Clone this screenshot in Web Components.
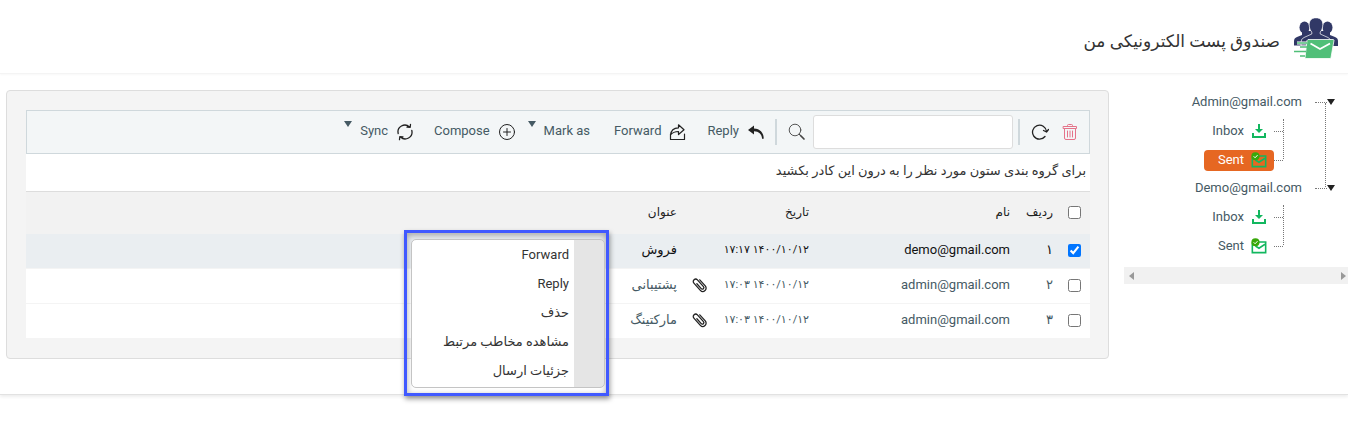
<!DOCTYPE html>
<html lang="fa" dir="rtl">
<head>
<meta charset="utf-8">
<title>صندوق پست الکترونیکی من</title>
<style>
body{margin:0;min-height:100vh;background:#fff;font:13px/20px Roboto,"DejaVu Sans",sans-serif;color:#455a64}
</style>
</head>
<body>
<mail-app></mail-app>
<script>
const base = '*{box-sizing:border-box}button{font:inherit;color:inherit;background:none;border:0;padding:0;cursor:pointer}ul{list-style:none;margin:0;padding:0}';
function define(name, css, html) {
  customElements.define(name, class extends HTMLElement {
    constructor() {
      super();
      this.attachShadow({mode: 'open'}).innerHTML = '<style>' + base + css + '</style>' + (typeof html === 'function' ? html(this) : html);
    }
  });
}

const stroke = 'fill="none" stroke="currentColor" stroke-linecap="round" stroke-linejoin="round"';
const icons = {
  trash: ['0 0 18 18', `<g ${stroke}><path d="M2.500 3.500h13v2h-13zM6.500 3.500v-1q0-1 1-1h3q1 0 1 1v1M3.500 5.500v9.500q0 1.500 1.500 1.500h8q1.500 0 1.500-1.500V5.500M6.500 8v6M9 8v6M11.500 8v6"/></g>`],
  refresh: ['0 0 18 18', `<g ${stroke} stroke-width="1.300"><path d="M15.500 8.500A7 7 0 1 0 14 13.500M17.500 6.500l-2 2.500-3-1.500"/></g>`],
  search: ['0 0 18 18', `<g ${stroke}><circle cx="7" cy="7" r="5.800" stroke-width=".9"/><path d="M11.200 11.200l1.200 1.200"/><path d="M12.500 12.500l3.500 3.500" stroke-width="1.700"/></g>`],
  reply: ['0 0 18 18', `<path d="M1 7l6-4.500v3c6 .3 9.500 4 9.700 9.500q0 1-.8 1t-.9-1c-.5-4-3-6.500-8-6.700v3.200z" fill="currentColor"/>`],
  forward: ['0 0 18 18', `<g ${stroke} stroke-width="1.200"><path d="M1.500 11v5.500h14V11M1.500 12c.5-5 3-7 8-7.200V1.800l5.500 5-5.500 4.700V8.500c-4 0-6 1-8 3.500z"/></g>`],
  plus: ['0 0 18 18', `<g ${stroke}><circle cx="9" cy="9" r="7.500"/><path d="M9 5.500v7M5.500 9h7"/></g>`],
  sync: ['0 0 18 18', `<g ${stroke} stroke-width="1.300"><path d="M2.200 10.500A6.800 6.800 0 0 1 13.500 4M15.800 7.500A6.800 6.800 0 0 1 4.500 14M11 4.200l3.200.1.300-3M7 13.800l-3.200-.1-.3 3"/></g>`],
  clip: ['0 0 18 18', `<g ${stroke} stroke-width="1.300" transform="rotate(-42 9 9)"><path d="M12.300 5v8.200a3.300 3.300 0 0 1-6.600 0V3.500a2.400 2.400 0 0 1 4.800 0v9a1.500 1.500 0 0 1-3 0V6"/></g>`],
  inbox: ['0 0 16 16', `<path d="M1 10v5h14v-5h-2v3H3v-3zM7 1h2v5h3l-4 4-4-4h3z" fill="#12b75f"/>`],
  sent: ['0 0 18 18', `<path d="M1.500 6v10.500h15V6.500l-7.500 5-4-2.500M9 4.500h7.500v3" fill="none" stroke="#12b75f" stroke-width="1.800"/><circle cx="5" cy="4.800" r="4.600" fill="#39a80a"/><path d="M3 4.800l1.600 1.700 2.800-3" fill="none" stroke="#fff" stroke-width="1.100"/>`],
  logo: ['0 0 44 42', `<g fill="#313866"><ellipse cx="10.500" cy="9.500" rx="5" ry="6"/><ellipse cx="33.500" cy="9.500" rx="5" ry="6"/><path d="M0 28v-5q0-3 3-4l5-2v-4h28v4l5 2q3 1 3 4v5z"/><path d="M22 -.2c5 0 7.500 3.700 6.700 8.500-.4 2.500-1 4.200-2.500 5.700v2l7.800 3.500q3 1.300 3 4.500v4H7v-4q0-3.200 3-4.500l7.800-3.500v-2c-1.500-1.500-2.100-3.200-2.500-5.700C14.500 3.500 17 -.2 22 -.2z" stroke="#fff" stroke-width=".7"/></g><path d="M3 25h12M1 29h13v12H1z" stroke="#fff" stroke-width="3" fill="#fff"/><path d="M14 21.500h25q1 0 1 1l-3 17q0 1-1 1H12q-1 0-1-1l2-17z" fill="#50bf78" stroke="#fff" stroke-width=".8"/><path d="M16.500 25.500l9.500 5.500 10-5.500" fill="none" stroke="#fff" stroke-width="1.800"/><path d="M3 25h10M6 29h7M0 33.500h12M6 38h5" stroke="#50bf78" stroke-width="1.400"/>`]
};
define('ui-icon', ':host{display:block;flex:none;width:18px;height:18px}svg{display:block;width:100%;height:100%}',
  el => { const i = icons[el.getAttribute('name')]; return `<svg viewBox="${i[0]}" aria-hidden="true">${i[1]}</svg>`; });

define('page-header', `
:host{display:flex;align-items:center;height:74px;padding:4px 10px 0;gap:14px;border-bottom:1px solid #f4f4f4;box-shadow:0 1px 2px #f8f8f8;color:#333}
ui-icon{width:44px;height:42px}
h1{margin:0;padding-top:4px;font-size:17px;line-height:24px;font-weight:400}`,
'<ui-icon name="logo"></ui-icon><h1><slot></slot></h1>');

define('tool-button', `
:host{display:block;flex:none;color:#455a64}
button{display:flex;align-items:center;gap:8px;height:24px}
span{padding-bottom:2px}
ui-icon{color:#222}
i{width:0;border:4px solid transparent;border-top:6px solid #455a64;border-bottom:0;margin-bottom:16px}`,
el => `<button type="button">${el.hasAttribute('icon') ? `<ui-icon name="${el.getAttribute('icon')}"></ui-icon>` : ''}<span>${el.getAttribute('label')}</span>${el.hasAttribute('menu') ? '<i></i>' : ''}</button>`);

define('mail-toolbar', `
:host{display:flex;align-items:center;height:44px;padding:0 10px;border:1px solid #cfd8dc;background:#f3f6f7}
.side,.main,.actions{display:flex;align-items:center}
.side{gap:12px}
ui-icon{color:#222}
.side button:first-child ui-icon{color:#e5738a}
hr{width:2px;height:26px;border:0;margin:0 11px 0 10px;background:#cfd8dc}
.main hr:first-child{margin-left:5px}
.main ui-icon{color:#444}
input{width:200px;height:34px;border:1px solid #ddd;border-radius:3px;background:#fff;margin-left:7px}
.actions{gap:20px}
tool-button[menu]{margin-left:-8px}
tool-button[menu]:not([icon]){margin-right:4px}`,
`<div class="side"><button type="button" aria-label="حذف"><ui-icon name="trash"></ui-icon></button><button type="button" aria-label="بارگذاری مجدد"><ui-icon name="refresh"></ui-icon></button></div>
<div class="main"><hr><input type="search" aria-label="جستجو"><button type="button" aria-label="جستجو"><ui-icon name="search"></ui-icon></button><hr></div>
<div class="actions"><tool-button icon="reply" label="Reply"></tool-button><tool-button icon="forward" label="Forward"></tool-button><tool-button label="Mark as" menu></tool-button><tool-button icon="plus" label="Compose"></tool-button><tool-button icon="sync" label="Sync" menu></tool-button></div>`);

const rows = [
  ['۱', 'demo@gmail.com', '۱۴۰۰/۱۰/۱۲ ۱۷:۱۷', 'فروش', false],
  ['۲', 'admin@gmail.com', '۱۴۰۰/۱۰/۱۲ ۱۷:۰۳', 'پشتیبانی', true],
  ['۳', 'admin@gmail.com', '۱۴۰۰/۱۰/۱۲ ۱۷:۰۳', 'مارکتینگ', true]
];
define('mail-table', `
:host{display:block}
table{width:100%;table-layout:fixed;border-collapse:separate;border-spacing:0}
th,td{padding:0 7px;text-align:right;font-weight:400;white-space:nowrap}
th{height:43px;padding-bottom:2px;background:#f2f2f2;border-top:1px solid #ddd;color:#222;font-size:12px}
td{height:35px;padding-bottom:2px;background:#fff;border-bottom:1px solid #f4f4f4}
.on td{background:#eaeef1;color:#111}
.check{width:30px;padding-right:9px}.num{width:43px}.name{width:201px}.date{width:100px}.clip{width:32px}
input{display:block;width:13px;height:13px;margin:0}
td.date{font-size:11px}
ui-icon{color:#222}`,
`<table><thead><tr><th class="check"><input type="checkbox" aria-label="انتخاب همه"></th><th class="num">ردیف</th><th class="name">نام</th><th class="date">تاریخ</th><th class="clip"></th><th>عنوان</th></tr></thead><tbody>${rows.map((r, i) => `<tr class="${i ? '' : 'on'}"><td class="check"><input type="checkbox" aria-label="انتخاب ردیف ${r[0]}" ${i ? '' : 'checked'}></td><td class="num">${r[0]}</td><td class="name">${r[1]}</td><td class="date">${r[2]}</td><td class="clip">${r[4] ? '<ui-icon name="clip"></ui-icon>' : ''}</td><td>${r[3]}</td></tr>`).join('')}</tbody></table>`);

define('context-menu', `
:host{display:block;border:3px solid #4059ff;padding:6px 1px 5px 4px;box-shadow:1px 3px 5px #0006,inset 0 2px 6px #0005}
ul{padding-bottom:2px;border:1px solid #c4c4c4;border-radius:5px;overflow:hidden;background:linear-gradient(to left,#e5e5e5 30px,#fff 30px);color:#333}
button{display:block;width:100%;height:29px;padding:0 35px 0 6px;text-align:right}`,
`<ul role="menu">${['Forward', 'Reply', 'حذف', 'مشاهده مخاطب مرتبط', 'جزئیات ارسال'].map(t => `<li role="none"><button type="button" role="menuitem">${t}</button></li>`).join('')}</ul>`);

define('mail-panel', `
:host{display:block;flex:1;min-width:0;position:relative;padding:19px 18px 19px 19px;border:1px solid #ddd;border-radius:4px;background:#f4f4f4}
p{margin:0;height:37px;line-height:34px;padding:0 4px;background:#fff;color:#333}
context-menu{position:absolute;left:397px;top:139px;width:205px}`,
'<mail-toolbar></mail-toolbar><p>برای گروه بندی ستون مورد نظر را به درون این کادر بکشید</p><mail-table></mail-table><context-menu></context-menu>');

define('account-group', `
:host{display:block;position:relative}
.head{display:flex;align-items:center;height:28px;padding-right:13px}
.head i{border:4px solid transparent;border-top:6px solid #222;border-bottom:0}
.head b{width:12px;border-top:1px dotted #777}
.head button{margin-right:13px}
:host([linked])::after{content:"";position:absolute;right:22px;top:15px;height:84px;border-left:1px dotted #777}
ul{position:relative}
ul::before{content:"";position:absolute;right:64px;top:2px;height:40px;border-left:1px dotted #777}
li{display:flex;align-items:center;height:28px;margin-top:1px;padding-right:65px}
li b{width:9px;border-top:1px dotted #777}
li button{display:flex;align-items:center;gap:7px;height:21px;width:70px;padding-right:7px;border-radius:4px}
li ui-icon{width:16px;height:16px}
.on{background:#e66722;color:#fff}`,
el => `<div class="head"><i></i><b></b><button type="button"><slot></slot></button></div><ul><li><b></b><button type="button"><ui-icon name="inbox"></ui-icon>Inbox</button></li><li><b></b><button type="button" class="${el.hasAttribute('linked') ? 'on' : ''}"><ui-icon name="sent"></ui-icon>Sent</button></li></ul>`);

define('account-tree', `
:host{display:block;flex:none;width:224px}
.bar{display:flex;justify-content:space-between;align-items:center;height:17px;margin-top:7px;padding:0 2px 0 5px;background:#f1f1f1}
.bar button{border:4px solid transparent}
.bar .r{border-left:5px solid #999;border-right:0}.bar .l{border-right:5px solid #999;border-left:0}`,
`<account-group linked>Admin@gmail.com</account-group><account-group>Demo@gmail.com</account-group><div class="bar"><button class="r" type="button" aria-label="راست"></button><button class="l" type="button" aria-label="چپ"></button></div>`);

define('mail-app', `
:host{display:block}
main{display:flex;align-items:flex-start;gap:15px;padding:16px 0 35px 6px;border-bottom:1px solid #e2e2e2;box-shadow:0 2px 3px #eee}
account-tree{margin-top:-2px}`,
'<page-header>صندوق پست الکترونیکی من</page-header><main><account-tree></account-tree><mail-panel></mail-panel></main>');
</script>
</body>
</html>
